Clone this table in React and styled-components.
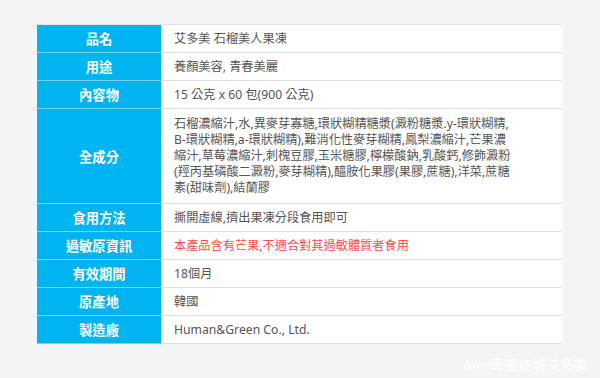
import React from 'react'
import { styled, createGlobalStyle } from 'styled-components'

const Global = createGlobalStyle`
  html, body {
    margin: 0;
    padding: 0;
    background: #f2f5f8;
  }
  body {
    font-family: "Noto Sans", "Noto Sans CJK TC", sans-serif;
  }
`;

const Page = styled.div`
  position: relative;
  width: 600px;
  height: 378px;
  box-sizing: border-box;
  padding: 24px 0 0 37px;
  background: #f2f5f8;
  overflow: hidden;
`;

const Table = styled.div`
  width: 525px;
  background: #fff;
  border-top: 1px solid #e3e3e3;
`;

const Row = styled.div`
  display: grid;
  grid-template-columns: 125px 1fr;
`;

const Label = styled.div`
  display: flex;
  align-items: center;
  justify-content: center;
  background: #00b4ef;
  color: #fff;
  font-weight: 700;
  font-size: 13.3px;
  border-bottom: 1px solid #6fd3f6;
  border-right: 1px solid #c6ecfa;
`;

const Value = styled.div`
  display: flex;
  flex-direction: column;
  justify-content: center;
  min-height: 28px;
  box-sizing: border-box;
  padding: ${p => (p.$multi ? '7px 12px' : '0 12px')};
  font-size: 12.2px;
  line-height: 16px;
  color: ${p => (p.$warn ? '#ff4b4b' : '#555')};
  border-bottom: 1px solid #e0e0e0;
  white-space: nowrap;
`;

const Line = styled.span`
  display: block;
`;

const Watermark = styled.div`
  position: absolute;
  right: 12px;
  bottom: 4px;
  font-family: "Liberation Serif", "Noto Sans CJK TC", serif;
  font-size: 14px;
  color: rgba(255, 255, 255, 0.9);
`;

const ingredients = [
  '石榴濃縮汁,水,異麥芽寡糖,環狀糊精糖漿(澱粉糖漿.y-環狀糊精,',
  'B-環狀糊精,a-環狀糊精),難消化性麥芽糊精,鳳梨濃縮汁,芒果濃',
  '縮汁,草莓濃縮汁,刺槐豆膠,玉米糖膠,檸檬酸鈉,乳酸鈣,修飾澱粉',
  '(羥丙基磷酸二澱粉,麥芽糊精),醯胺化果膠(果膠,蔗糖),洋菜,蔗糖',
  '素(甜味劑),結蘭膠',
];

const rows = [
  { label: '品名', value: '艾多美 石榴美人果凍' },
  { label: '用途', value: '養顏美容, 青春美麗' },
  { label: '內容物', value: '15 公克 x 60 包(900 公克)' },
  { label: '全成分', lines: ingredients },
  { label: '食用方法', value: '撕開虛線,擠出果凍分段食用即可' },
  { label: '過敏原資訊', value: '本產品含有芒果,不適合對其過敏體質者食用', warn: true },
  { label: '有效期間', value: '18個月' },
  { label: '原產地', value: '韓國' },
  { label: '製造廠', value: 'Human&Green Co., Ltd.' },
];

const App = () => {
  return (
    <Page>
      <Global />
      <Table>
        {rows.map(r => (
          <Row key={r.label}>
            <Label>{r.label}</Label>
            <Value $multi={!!r.lines} $warn={r.warn}>
              {r.lines ? r.lines.map(l => <Line key={l}>{l}</Line>) : r.value}
            </Value>
          </Row>
        ))}
      </Table>
      <Watermark>Amy專屬商城艾多美</Watermark>
    </Page>
  )
}

export default App
